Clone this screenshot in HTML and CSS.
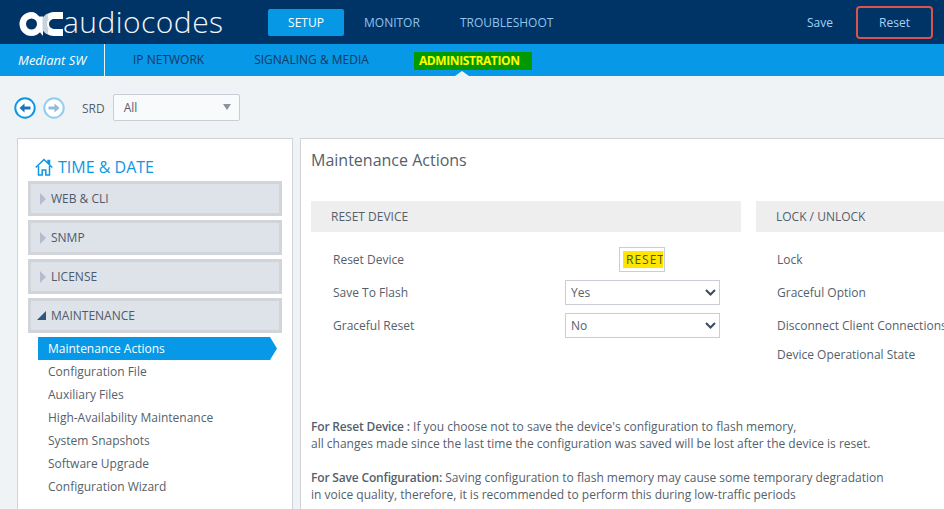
FILE: index.html
```html
<!DOCTYPE html>
<html lang="en">
<head>
  <meta charset="UTF-8" />
  <title>Maintenance Actions</title>
  <link rel="stylesheet" href="styles.css">
</head>
<body>

<header class="topbar">
  <div class="logo">
    <svg class="logo-mark" width="46" height="26" viewBox="0 0 46 26">
      <path fill-rule="evenodd" d="M12.500 1a12 12 0 1 0 0 24c3.500 0 6.500-1.500 8.500-3.800l2.500 3.300h.5V5.500h-3.800C18.200 2.800 15.500 1 12.500 1zm0 6.500a5.500 5.500 0 1 1 0 11a5.500 5.500 0 0 1 0-11z" fill="#fff"/>
      <path d="M44 4.500H35a8.500 8.500 0 0 0 0 17h9" fill="none" stroke="#fff" stroke-width="7"/>
      <path d="M23.500 7c1.500-2 3-3.500 5-4.500l1 6c-1 1-1.500 3-1.500 4.500s.5 3.500 1.500 4.500l-1 6c-2-1-3.500-2.500-5-4.500z" fill="#c9d3de"/>
    </svg>
    <span class="logo-text">audiocodes</span>
  </div>
  <nav class="mainnav">
    <a class="mainnav-item active">SETUP</a>
    <a class="mainnav-item">MONITOR</a>
    <a class="mainnav-item">TROUBLESHOOT</a>
  </nav>
  <div class="top-actions">
    <a class="top-save">Save</a>
    <a class="top-reset">Reset</a>
  </div>
</header>

<div class="subbar">
  <div class="product">Mediant SW</div>
  <a class="subnav-item ip">IP NETWORK</a>
  <a class="subnav-item sig">SIGNALING &amp; MEDIA</a>
  <a class="subnav-item admin">ADMINISTRATION</a>
</div>

<div class="toolbar">
  <svg class="nav-circle" width="22" height="22" viewBox="0 0 22 22">
    <circle cx="11" cy="11" r="9.700" fill="#fff" stroke="#0d97e4" stroke-width="2"/>
    <path d="M5.500 11l5-4.500v3h6v3h-6v3z" fill="#1b75bb"/>
  </svg>
  <svg class="nav-circle" width="22" height="22" viewBox="0 0 22 22">
    <circle cx="11" cy="11" r="9.700" fill="#fff" stroke="#8fcdf2" stroke-width="2"/>
    <path d="M16.500 11l-5-4.500v3h-6v3h6v3z" fill="#8fbbdc"/>
  </svg>
  <span class="srd-label">SRD</span>
  <div class="srd-select">
    <span>All</span>
    <span class="srd-caret"></span>
  </div>
</div>

<main class="content">
  <aside class="sidebar">
    <h2 class="side-title">
      <svg width="18" height="18" viewBox="0 0 18 18" fill="none" stroke="#0d97e4" stroke-width="1.500">
        <path d="M.7 9.500L9 1.500l8.300 8"/>
        <path d="M13 5V2.500h1.500V6.500"/>
        <path d="M3.500 8v9h3.700v-5h3.600v5h3.700V8"/>
      </svg>
      TIME &amp; DATE
    </h2>
    <div class="acc"><span class="acc-closed"></span>WEB &amp; CLI</div>
    <div class="acc"><span class="acc-closed"></span>SNMP</div>
    <div class="acc"><span class="acc-closed"></span>LICENSE</div>
    <div class="acc"><span class="acc-open"></span>MAINTENANCE</div>
    <ul class="side-menu">
      <li class="side-active">Maintenance Actions</li>
      <li>Configuration File</li>
      <li>Auxiliary Files</li>
      <li>High-Availability Maintenance</li>
      <li>System Snapshots</li>
      <li>Software Upgrade</li>
      <li>Configuration Wizard</li>
    </ul>
  </aside>

  <section class="panel">
    <h1 class="panel-title">Maintenance Actions</h1>
    <div class="columns">
      <div class="col col-reset">
        <div class="col-head">RESET DEVICE</div>
        <div class="row">
          <label>Reset Device</label>
          <div class="reset-cell"><button class="reset-btn"><span>RESET</span></button></div>
        </div>
        <div class="row">
          <label>Save To Flash</label>
          <select class="sel"><option>Yes</option></select>
        </div>
        <div class="row">
          <label>Graceful Reset</label>
          <select class="sel"><option>No</option></select>
        </div>
      </div>
      <div class="col col-lock">
        <div class="col-head">LOCK / UNLOCK</div>
        <div class="row"><label>Lock</label></div>
        <div class="row"><label>Graceful Option</label></div>
        <div class="row"><label>Disconnect Client Connections</label></div>
        <div class="row row-short"><label>Device Operational State</label></div>
      </div>
    </div>
    <div class="notes">
      <p><b>For Reset Device :</b> If you choose not to save the device's configuration to flash memory,<br>all changes made since the last time the configuration was saved will be lost after the device is reset.</p>
      <p><b>For Save Configuration:</b> Saving configuration to flash memory may cause some temporary degradation<br>in voice quality, therefore, it is recommended to perform this during low-traffic periods</p>
    </div>
  </section>
</main>

</body>
</html>
```

FILE: styles.css
```css
* {
  box-sizing: border-box;
}

html, body {
  height: 100%;
}

body {
  margin: 0;
  overflow: hidden;
  background-color: #eff3f6;
  font-family: "Open Sans", Arial, sans-serif;
  font-size: 12px;
  color: #4a5568;
}

/* top bar */
.topbar {
  display: flex;
  align-items: center;
  height: 44px;
  background-color: #003366;
}

.logo {
  display: flex;
  align-items: center;
  width: 268px;
  padding-left: 19px;
}

.logo-mark {
  flex: none;
  margin-top: 4px;
  margin-right: -2px;
}

.logo-text {
  color: #f2f5f8;
  font-size: 30px;
  font-weight: 300;
  line-height: 44px;
  letter-spacing: 0.45px;
}

.mainnav {
  display: flex;
  align-items: center;
}

.mainnav-item {
  padding: 0 20px;
  color: #8fc4ec;
  font-size: 12px;
  line-height: 27px;
}

.mainnav-item.active {
  width: 76px;
  padding: 0;
  text-align: center;
  background-color: #0798e5;
  color: #fff;
  border-radius: 2px;
}

.top-actions {
  display: flex;
  align-items: center;
  margin-left: auto;
  margin-right: 11px;
}

.top-save {
  margin-right: 23px;
  color: #a6d2f3;
  font-size: 12px;
}

.top-reset {
  width: 77px;
  height: 33px;
  border: 2px solid #d9534f;
  border-radius: 4px;
  color: #a6d2f3;
  font-size: 12px;
  line-height: 29px;
  text-align: center;
}

/* second bar */
.subbar {
  position: relative;
  display: flex;
  align-items: center;
  height: 32px;
  background-color: #0798e8;
}

.product {
  width: 105px;
  height: 32px;
  padding-left: 18px;
  border-right: 1px solid #e6f4fc;
  color: #fff;
  font-size: 13px;
  font-style: italic;
  line-height: 32px;
}

.subnav-item {
  color: #14395f;
  font-size: 12px;
  line-height: 18px;
}

.ip {
  margin-left: 28px;
}

.sig {
  margin-left: 50px;
}

.admin {
  margin-left: 45px;
  margin-top: 2px;
  padding: 0 12px 0 5px;
  background-color: #009900;
  color: #ffff00;
  font-weight: 700;
  letter-spacing: -0.4px;
}

.subbar::after {
  content: "";
  position: absolute;
  left: 455px;
  bottom: 0;
  border-left: 7px solid transparent;
  border-right: 7px solid transparent;
  border-bottom: 5px solid #eff3f6;
}

/* srd row */
.toolbar {
  display: flex;
  align-items: center;
  height: 62px;
  padding-left: 14px;
  padding-top: 2px;
}

.nav-circle {
  margin-right: 7px;
}

.srd-label {
  margin-left: 10px;
  margin-right: 8px;
  color: #555f6b;
  font-size: 12px;
}

.srd-select {
  display: flex;
  align-items: center;
  justify-content: space-between;
  width: 127px;
  height: 27px;
  margin-top: -2px;
  padding: 0 8px 0 10px;
  background-color: #f9fafb;
  border: 1px solid #c9ced6;
  border-radius: 2px;
  color: #555f6b;
}

.srd-caret {
  border-left: 4.500px solid transparent;
  border-right: 4.500px solid transparent;
  border-top: 6px solid #8a939e;
}

/* main area */
.content {
  display: flex;
  align-items: flex-start;
  padding-left: 17px;
}

.sidebar {
  flex: none;
  width: 276px;
  height: 371px;
  padding: 0 10px;
  background-color: #fff;
  border: 1px solid #cfd3d8;
  border-bottom: 0;
}

.side-title {
  display: flex;
  align-items: center;
  gap: 5px;
  height: 42px;
  margin: 0;
  padding: 13px 0 0 7px;
  color: #0d97e4;
  font-size: 16px;
  font-weight: 400;
}

.acc {
  display: flex;
  align-items: center;
  height: 35px;
  margin-bottom: 4px;
  background-color: #dde3e9;
  border: 3px solid #d1d5da;
  color: #4d5a6b;
  font-size: 12px;
}

.acc-closed {
  width: 0;
  margin-left: 9px;
  margin-right: 5px;
  border-top: 6.500px solid transparent;
  border-bottom: 6.500px solid transparent;
  border-left: 6px solid #b4bdd0;
}

.acc-open {
  width: 0;
  margin-left: 6px;
  margin-right: 5px;
  border-left: 9px solid transparent;
  border-bottom: 9px solid #2f5580;
}

.side-menu {
  list-style: none;
  margin: 0;
  padding: 0 0 0 10px;
  font-size: 12px;
}

.side-menu li {
  height: 23px;
  padding-left: 10px;
  color: #555f6b;
  line-height: 23px;
}

.side-menu .side-active {
  width: 239px;
  background-color: #0798e8;
  color: #fff;
  clip-path: polygon(0 0, calc(100% - 7px) 0, 100% 50%, calc(100% - 7px) 100%, 0 100%);
}

.panel {
  flex: 1;
  height: 371px;
  margin-left: 7px;
  padding-left: 10px;
  background-color: #fff;
  border: 1px solid #cfd3d8;
  border-right: 0;
  border-bottom: 0;
  overflow: hidden;
}

.panel-title {
  height: 62px;
  margin: 0;
  padding-top: 10px;
  color: #555f6b;
  font-size: 16px;
  font-weight: 400;
}

.columns {
  display: flex;
  gap: 15px;
  height: 217px;
}

.col {
  flex: none;
}

.col-reset {
  width: 430px;
}

.col-lock {
  width: 300px;
}

.col-head {
  height: 31px;
  margin-bottom: 11px;
  padding-left: 20px;
  background-color: #eeeeee;
  color: #555f6b;
  font-size: 12px;
  line-height: 31px;
}

.row {
  display: flex;
  align-items: center;
  justify-content: space-between;
  height: 33px;
  padding-left: 22px;
  padding-right: 21px;
  color: #555f6b;
  white-space: nowrap;
}

.col-lock .row {
  padding-left: 21px;
}

.row-short {
  height: 25px;
}

.reset-cell {
  width: 155px;
  text-align: center;
}

.reset-btn {
  display: inline-block;
  width: 46px;
  height: 25px;
  margin-left: -1px;
  padding: 3px 1px 3px 3px;
  background-color: #fff;
  border: 1px solid #c9ced6;
  font: 12px "Open Sans", Arial, sans-serif;
  color: #3f5a1a;
  overflow: hidden;
  text-align: left;
}

.reset-btn span {
  display: block;
  height: 17px;
  overflow: hidden;
  background-color: #ffe600;
  padding-left: 3px;
  letter-spacing: 1px;
  line-height: 17px;
  white-space: nowrap;
}

.sel {
  appearance: none;
  width: 155px;
  height: 25px;
  padding-left: 5px;
  background-color: #fff;
  background-image: url("data:image/svg+xml,%3Csvg xmlns='http://www.w3.org/2000/svg' width='11' height='7'%3E%3Cpath d='M1 1l4.500 4.500L10 1' fill='none' stroke='%233b4a5e' stroke-width='2'/%3E%3C/svg%3E");
  background-repeat: no-repeat;
  background-position: right 3px center;
  border: 1px solid #c9ced6;
  border-radius: 0;
  color: #555f6b;
  font: 12px "Open Sans", Arial, sans-serif;
}

.notes {
  color: #555f6b;
  font-size: 12px;
  line-height: 17px;
}

.notes p {
  margin: 0 0 17px 0;
}

.notes b {
  font-weight: 600;
  letter-spacing: -0.17px;
}
```
